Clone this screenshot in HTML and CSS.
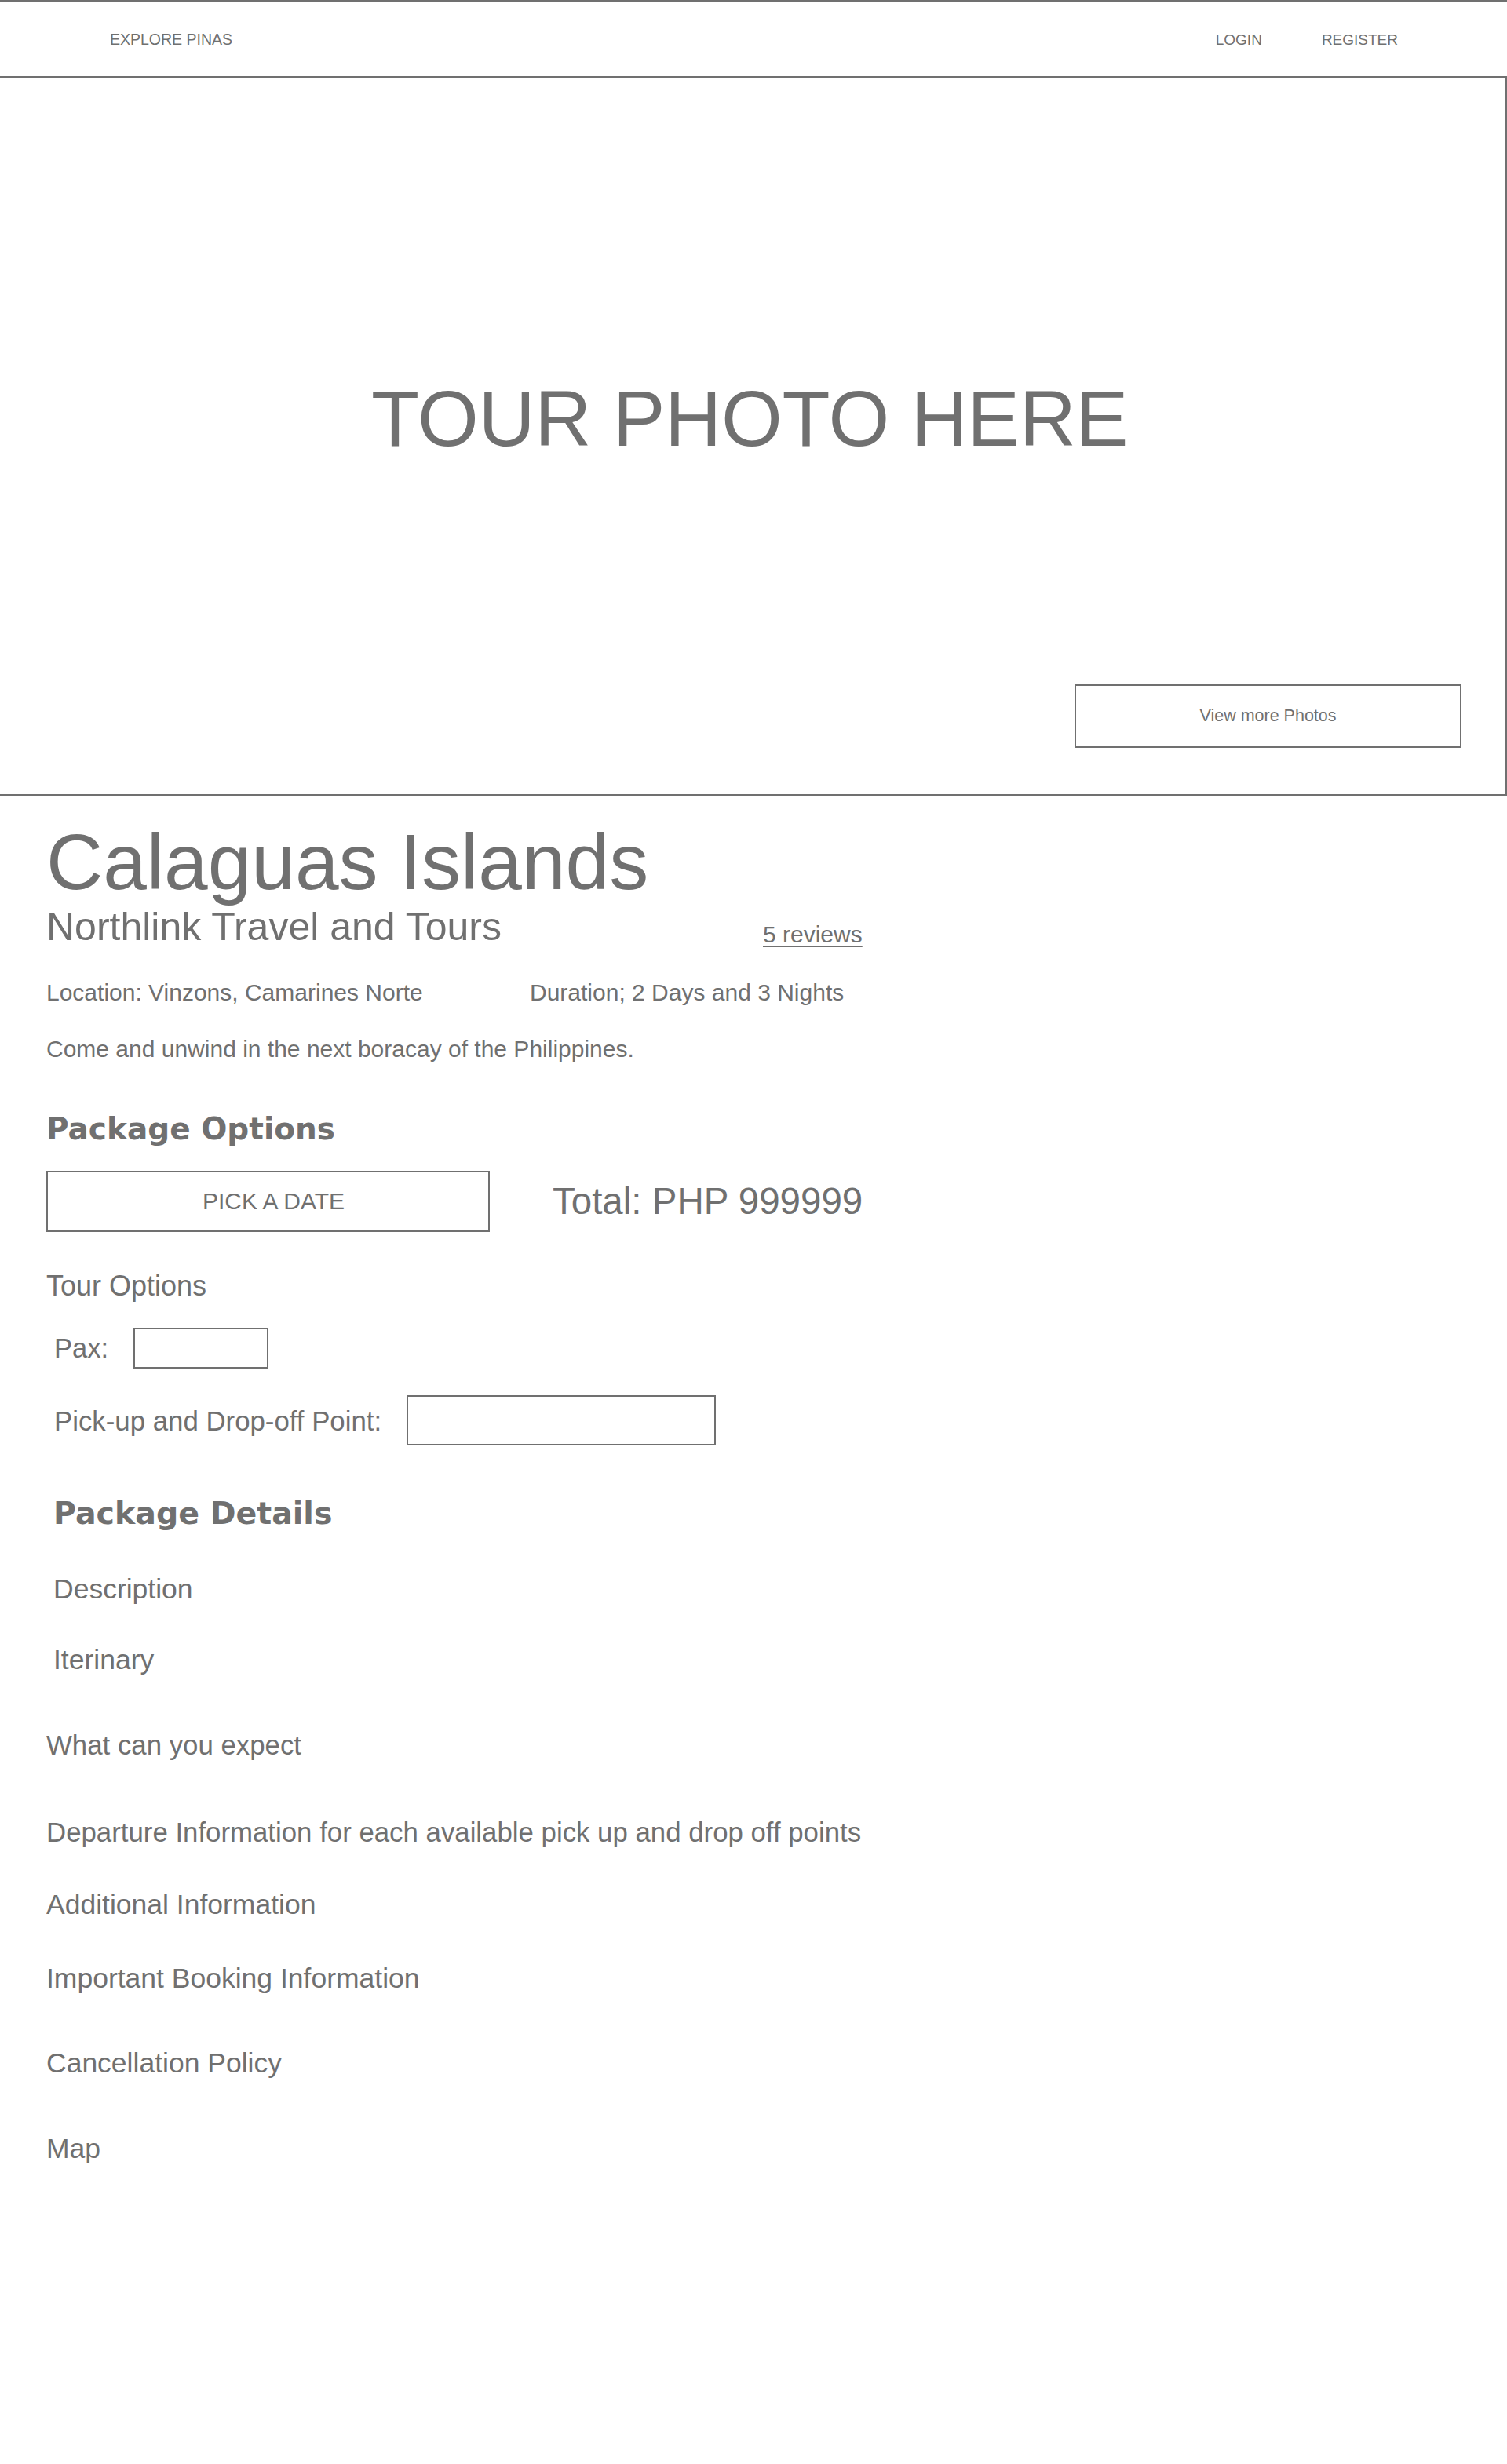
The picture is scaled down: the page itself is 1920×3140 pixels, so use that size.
FILE: index.html
```html
<!DOCTYPE html>
<html lang="en">
<head>
<meta charset="utf-8">
<title>Calaguas Islands - Explore Pinas</title>
<link rel="stylesheet" href="styles.css">
</head>
<body>
<header class="topnav">
  <a class="brand" href="#">EXPLORE PINAS</a>
  <nav class="auth">
    <a href="#">LOGIN</a>
    <a href="#">REGISTER</a>
  </nav>
</header>

<section class="hero">
  <div class="hero-text">TOUR PHOTO HERE</div>
  <button class="more-photos" type="button">View more Photos</button>
</section>

<main class="content">
  <h1 class="title">Calaguas Islands</h1>
  <div class="operator-row">
    <h2 class="operator">Northlink Travel and Tours</h2>
    <a class="reviews" href="#">5 reviews</a>
  </div>
  <div class="facts">
    <span class="location">Location: Vinzons, Camarines Norte</span>
    <span class="duration">Duration; 2 Days and 3 Nights</span>
  </div>
  <p class="tagline">Come and unwind in the next boracay of the Philippines.</p>

  <h3 class="section-title options-title">Package Options</h3>
  <div class="booking-row">
    <button class="date-btn" type="button">PICK A DATE</button>
    <div class="total">Total: PHP 999999</div>
  </div>

  <div class="item tour-options">Tour Options</div>
  <div class="field pax-field">
    <label class="item pax-label" for="pax">Pax:</label>
    <input class="box pax-box" id="pax" type="text">
  </div>
  <div class="field pickup-field">
    <label class="item pickup-label" for="pickup">Pick-up and Drop-off Point:</label>
    <input class="box pickup-box" id="pickup" type="text">
  </div>

  <h3 class="section-title details-title">Package Details</h3>
  <div class="item indent d-description">Description</div>
  <div class="item indent d-itinerary">Iterinary</div>
  <div class="item d-expect">What can you expect</div>
  <div class="item d-departure">Departure Information for each available pick up and drop off points</div>
  <div class="item d-additional">Additional Information</div>
  <div class="item d-important">Important Booking Information</div>
  <div class="item d-cancel">Cancellation Policy</div>
  <div class="item d-map">Map</div>
</main>
</body>
</html>
```

FILE: styles.css
```css
* {
  box-sizing: border-box;
}

html,
body {
  margin: 0;
  padding: 0;
  background: #ffffff;
}

body {
  width: 1920px;
  min-height: 3140px;
  font-family: "Liberation Sans", Arial, sans-serif;
  color: #707070;
}

a {
  color: inherit;
  text-decoration: none;
}

/* ---------- top navigation ---------- */
.topnav {
  height: 99px;
  border-top: 2px solid #707070;
  border-bottom: 2px solid #707070;
  display: flex;
  align-items: center;
  justify-content: space-between;
  padding: 2px 139px 0 140px;
  font-size: 19px;
  line-height: 1;
}

.brand {
  font-size: 19.5px;
}

.auth {
  display: flex;
  gap: 76px;
}

/* ---------- hero ---------- */
.hero {
  height: 915px;
  border-right: 2px solid #707070;
  border-bottom: 2px solid #707070;
  display: flex;
  flex-direction: column;
  align-items: center;
  padding-top: 384px;
}

.hero-text {
  font-size: 100px;
  line-height: 100px;
  letter-spacing: -0.3px;
  padding-right: 8px;
}

.more-photos {
  margin-top: auto;
  margin-bottom: 59px;
  margin-right: 56px;
  align-self: flex-end;
  width: 493px;
  height: 81px;
  border: 2px solid #707070;
  background: #ffffff;
  color: #707070;
  font-family: "Liberation Sans", Arial, sans-serif;
  font-size: 21.5px;
  padding: 0;
}

/* ---------- content ---------- */
.content {
  padding: 34px 0 0 59px;
}

.title {
  margin: 0;
  font-size: 100px;
  line-height: 100px;
  font-weight: normal;
}

.operator-row {
  margin-top: 9px;
  display: flex;
  align-items: flex-end;
}

.operator {
  margin: 0;
  width: 913px;
  font-size: 50px;
  line-height: 48px;
  font-weight: normal;
}

.reviews {
  font-size: 30px;
  line-height: 29px;
  text-decoration: underline;
  text-decoration-thickness: 2px;
  text-underline-offset: 4px;
}

.facts {
  margin-top: 45px;
  display: flex;
  font-size: 30px;
  line-height: 30px;
}

.location {
  width: 616px;
}

.tagline {
  margin: 42px 0 0;
  font-size: 30px;
  line-height: 30px;
}

.section-title {
  margin: 0;
  font-family: "DejaVu Sans", "Liberation Sans", sans-serif;
  font-weight: bold;
  font-size: 39px;
  line-height: 39px;
}

.options-title {
  margin-top: 67px;
}

.booking-row {
  margin-top: 34px;
  display: flex;
  align-items: center;
  gap: 80px;
}

.date-btn {
  width: 565px;
  height: 78px;
  border: 2px solid #707070;
  background: #ffffff;
  color: #707070;
  font-family: "Liberation Sans", Arial, sans-serif;
  font-size: 30px;
  padding: 0 0 0 14px;
}

.total {
  font-size: 47.5px;
  line-height: 46px;
}

.item {
  font-size: 35.5px;
  line-height: 35px;
}

.tour-options {
  margin-top: 51px;
  font-size: 36px;
}

.field {
  display: flex;
  align-items: center;
  padding-left: 10px;
}

.box {
  border: 2px solid #707070;
  background: #ffffff;
  padding: 0;
  margin: 0;
}

.pax-field {
  margin-top: 36px;
  gap: 32px;
}

.pax-label {
  font-size: 34.6px;
}

.pax-box {
  width: 172px;
  height: 52px;
}

.pickup-field {
  margin-top: 34px;
  gap: 32px;
}

.pickup-label {
  font-size: 34.8px;
}

.pickup-box {
  width: 394px;
  height: 64px;
}

.details-title {
  margin-top: 67px;
  padding-left: 9px;
  font-size: 39.5px;
}

.indent {
  padding-left: 9px;
}

.d-description { margin-top: 60px; }
.d-itinerary { margin-top: 55px; }
.d-expect { margin-top: 73px; font-size: 34.8px; }
.d-departure { margin-top: 76px; font-size: 34.8px; }
.d-additional { margin-top: 58px; }
.d-important { margin-top: 59px; }
.d-cancel { margin-top: 73px; }
.d-map { margin-top: 74px; }
```
